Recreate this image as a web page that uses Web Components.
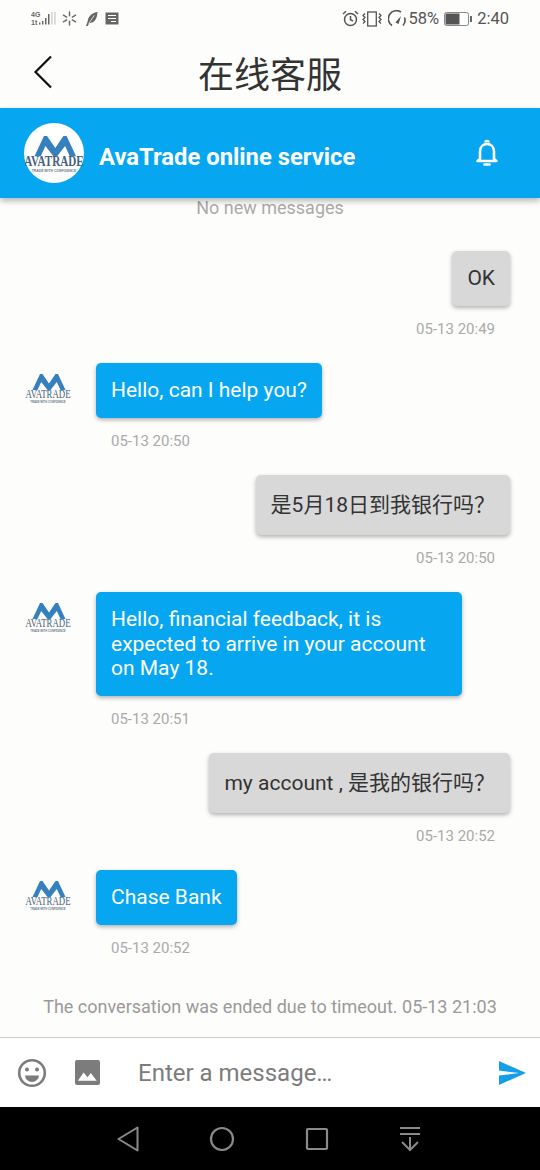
<!DOCTYPE html>
<html lang="zh"><head><meta charset="utf-8"><title>在线客服</title>
<style>
html,body{margin:0;padding:0;height:1170px;width:540px;overflow:hidden;background:#fdfdfb;font-family:Roboto,"Noto Sans CJK SC",sans-serif}
body{display:flex;flex-direction:column}
</style></head><body>
<status-bar></status-bar>
<title-bar>在线客服</title-bar>
<chat-header>AvaTrade online service</chat-header>
<chat-list>
  <chat-note slot="top">No new messages</chat-note>
  <chat-msg side="out" time="05-13 20:49" style="margin-top:33px">OK</chat-msg>
  <chat-msg side="in" time="05-13 20:50">Hello, can I help you?</chat-msg>
  <chat-msg side="out" tall time="05-13 20:50">是5月18日到我银行吗？</chat-msg>
  <chat-msg side="in" time="05-13 20:51">Hello, financial feedback, it is expected to arrive in your account on May 18.</chat-msg>
  <chat-msg side="out" tall time="05-13 20:52">my account , 是我的银行吗？</chat-msg>
  <chat-msg side="in" time="05-13 20:52">Chase Bank</chat-msg>
  <chat-note end>The conversation was ended due to timeout. 05-13 21:03</chat-note>
</chat-list>
<chat-composer placeholder="Enter a message…"></chat-composer>
<nav-bar></nav-bar>
<script>
function def(name, html){
  customElements.define(name, class extends HTMLElement{
    connectedCallback(){
      if(this.shadowRoot) return;
      const r=this.attachShadow({mode:'open'});
      r.innerHTML=typeof html==='function'?html(this):html;
    }
  });
}
function avaLogo(w){return `<svg width="${w}" viewBox="0 0 46 29" style="display:block" xmlns="http://www.w3.org/2000/svg">
<path d="M7.500 16L15 0H17.500L24 9.500 30.500 0H33L40.500 16H35.500L31.800 8 25.500 16H22.500L16.200 8 12.500 16z" fill="#3580bd"/>
<text transform="translate(23,24) scale(.767,1)" text-anchor="middle" font-family="Liberation Serif,serif" font-size="11.500" fill="#46617c">AVATRADE</text>
<text transform="translate(23,28.500) scale(.77,1)" text-anchor="middle" font-family="Liberation Sans,sans-serif" font-size="3.500" font-weight="700" fill="#6a7a8a">TRADE WITH CONFIDENCE</text>
</svg>`}

def('status-bar',`<style>
:host{display:flex;align-items:center;justify-content:space-between;height:40px;flex:none;padding:0 31px 3px 31px;box-sizing:border-box;color:#555;font:16.500px Roboto,sans-serif}
.g{display:flex;align-items:center}
svg{display:block}
</style>
<div class="g">
<svg width="25" height="15" viewBox="0 0 25 15" fill="#666"><text x="0" y="6" font-family="Liberation Sans,sans-serif" font-size="7" font-weight="700">4G</text><text x="0" y="13.500" font-family="Liberation Sans,sans-serif" font-size="7" font-weight="700">1t</text><rect x="8" y="11.500" width="1.500" height="2"/><rect x="11" y="10" width="1.500" height="3.500"/><rect x="14" y="7" width="1.500" height="6.500"/><rect x="17" y="3" width="1.500" height="10.500"/><rect x="20.500" y="1" width=".9" height="12.500" fill="#b5b5b5"/><rect x="23.500" y="1" width=".9" height="12.500" fill="#b5b5b5"/></svg>
<svg width="15" height="15" viewBox="0 0 16 16" stroke="#666" stroke-width="1.500" stroke-linecap="round" style="margin-left:6px"><path d="M8 1v4M8 11v4M1.500 4.500l3.500 2M11 9.500l3.500 2M1.500 11.500l3.500-2M11 6.500l3.500-2"/></svg>
<svg width="13" height="16" viewBox="0 0 14 16" style="margin-left:8px"><path d="M1 15.500C2 13 2.500 12 3 9.500 4 5 8 1 13.500.5 13 5 12.500 9 8.500 11.500L4.500 12.500 3 15.500z" fill="#666"/><path d="M4 13L10 4" stroke="#fff" stroke-width=".8"/></svg>
<svg width="14" height="13" viewBox="0 0 14 13" style="margin-left:7px"><path d="M.5.500h13v12H.5z" fill="#666"/><path d="M3 3.500h8M3 6.500h8M6 9.500h5" stroke="#fff" stroke-width="1.200"/></svg>
</div>
<div class="g">
<svg width="17" height="17" viewBox="0 0 17 17" fill="none" stroke="#555" stroke-width="1.500"><circle cx="8.500" cy="9.500" r="6"/><path d="M8.500 6v3.800l2.500 1.200M1 4l3-2.800M16 4l-3-2.800"/></svg>
<svg width="20" height="16" viewBox="0 0 20 16" fill="none" stroke="#555" stroke-width="1.300" style="margin-left:3px"><rect x="5.700" y="1" width="8.600" height="14"/><path d="M3 2.500l-2 2 2 2-2 2 2 2-2 2M17 2.500l2 2-2 2 2 2-2 2 2 2"/></svg>
<svg width="19" height="18" viewBox="0 0 19 18" fill="none" stroke="#555" stroke-width="1.600" style="margin-left:6px"><path d="M4 15.500A8 8 0 0 1 13 2"/><path d="M16.500 7.500a8 8 0 0 1-1.500 8"/><path d="M7.500 12.500L13 6l-2.500 8z" fill="#555" stroke="none"/></svg>
<span style="margin-left:2px">58%</span>
<svg width="28" height="14" viewBox="0 0 28 14" style="margin-left:5px"><rect x=".5" y=".5" width="24" height="13" rx="2" fill="#fff" stroke="#888"/><rect x="1.500" y="1.500" width="14" height="11" fill="#555"/><rect x="26" y="4" width="2" height="6" fill="#666"/></svg>
<span style="margin-left:5px">2:40</span>
</div>`);

def('title-bar',`<style>
:host{display:flex;align-items:center;justify-content:center;height:68px;flex:none;position:relative;color:#333;font:36px/1 "Noto Sans CJK SC",sans-serif;padding-bottom:4px;box-sizing:border-box}
.back{position:absolute;left:33px;top:15px;display:block}
</style>
<svg class="back" width="20" height="34" viewBox="0 0 20 34" fill="none" stroke="#111" stroke-width="2.200"><path d="M18 1.500L2.500 17 18 32.500"/></svg>
<slot></slot>`);

def('chat-header',()=>`<style>
:host{display:flex;align-items:center;height:90px;flex:none;background:#06a6f1;color:#fff;font:700 23.800px Roboto,sans-serif;padding:0 41px 0 24px;box-sizing:border-box;position:relative;z-index:2;box-shadow:0 3px 6px rgba(0,0,0,.28)}
.av{width:60px;height:60px;border-radius:50%;background:#fff;display:flex;align-items:center;justify-content:center;margin-right:15px;flex:none;padding-top:3px;box-sizing:border-box}
.t{flex:1;padding-top:8px}
svg.b{display:block}
</style>
<div class="av">${avaLogo(58)}</div><div class="t"><slot></slot></div>
<svg class="b" width="24" height="28" viewBox="0 0 24 28" fill="none" stroke="#fff" stroke-width="2.600" stroke-linejoin="round"><path d="M5 20V12.500C5 8 8 5 12 5s7 3 7 7.500V20l2.500 2h-19z"/><path d="M10.500 3.500a1.500 1.500 0 0 1 3 0"/><path d="M9.500 25.500h5" stroke-linecap="round"/></svg>`);

def('chat-list',`<style>
:host{display:flex;flex-direction:column;flex:1;min-height:0;overflow:hidden}
</style><slot name="top"></slot><slot></slot>`);

def('chat-note',`<style>
:host{display:block;text-align:center;color:#aaa;font:18px/20px Roboto,sans-serif}
:host([end]){color:#9a9a9a;margin-top:15px}
</style><slot></slot>`);

def('chat-msg',el=>{
 const out=el.getAttribute('side')==='out';
 const t=el.getAttribute('time');
 return `<style>
:host{display:flex;flex:none;padding:0 30px 25.500px 25px;align-items:flex-start;${out?'justify-content:flex-end;':''}}
:host([tall]){padding-bottom:25px}
.av{width:46px;flex:none;margin:11px 25px 0 0}
.c{display:flex;flex-direction:column;${out?'align-items:flex-end;':'align-items:flex-start;'}max-width:366px}
.b{padding:15px;box-sizing:border-box;border-radius:5px;font:21px/24.500px Roboto,"Noto Sans CJK SC",sans-serif;${out?'background:#d8d8d8;color:#333;':'background:#06a6f1;color:#fff;'}box-shadow:0 2px 4px rgba(0,0,0,.3)}
:host([tall]) .b{line-height:30px}
.t{margin:14px ${out?'15px':'0'} 0 ${out?'0':'15px'};font:15px/18px Roboto,sans-serif;color:#aaa}
</style>
${out?'':`<div class="av">${avaLogo(46)}</div>`}
<div class="c"><div class="b"><slot></slot></div><div class="t">${t}</div></div>`});

def('chat-composer',el=>`<style>
:host{display:flex;align-items:center;height:70px;flex:none;background:#fff;border-top:1px solid #ccc;box-sizing:border-box;padding:0 14px 0 17px;color:#7c7c7c;font:24px Roboto,sans-serif}
svg{display:block;flex:none}
.p{flex:1;margin-left:38px}
</style>
<svg width="30" height="30" viewBox="0 0 30 30"><circle cx="15" cy="15" r="12.800" fill="none" stroke="#7c7c7c" stroke-width="2.600"/><circle cx="10" cy="11.500" r="2" fill="#7c7c7c"/><circle cx="20" cy="11.500" r="2" fill="#7c7c7c"/><path d="M8 17.500h14a7 6.500 0 0 1-14 0z" fill="#7c7c7c"/></svg>
<svg width="25" height="25" viewBox="0 0 26 26" style="margin-left:28px"><path d="M2 0h22a2 2 0 0 1 2 2v22a2 2 0 0 1-2 2H2a2 2 0 0 1-2-2V2a2 2 0 0 1 2-2z" fill="#7c7c7c"/><path d="M3 21.500L9 13l4 5 3.500-4.500 6 8z" fill="#fff"/></svg>
<div class="p">${el.getAttribute('placeholder')}</div>
<svg width="27" height="24" viewBox="0 0 27 24"><path d="M0 0L27 12 0 24V14.500L20 12 0 9.500z" fill="#159fe8"/></svg>`);

def('nav-bar',`<style>
:host{display:flex;align-items:center;height:63px;flex:none;background:#000;padding:0 119px 0 117px;box-sizing:border-box;justify-content:space-between}
svg{display:block}
</style>
<svg width="22" height="26" viewBox="0 0 22 26" fill="none" stroke="#8a8a8a" stroke-width="2" stroke-linejoin="round"><path d="M20.500 1.500v23L1.500 13z"/></svg>
<svg width="26" height="26" viewBox="0 0 26 26" fill="none" stroke="#8a8a8a" stroke-width="2.200"><circle cx="13" cy="13" r="11"/></svg>
<svg width="24" height="24" viewBox="0 0 24 24" fill="none" stroke="#8a8a8a" stroke-width="2.200" stroke-linejoin="round"><rect x="2" y="2" width="20" height="20" rx="1"/></svg>
<svg width="22" height="26" viewBox="0 0 22 26" fill="none" stroke="#8a8a8a" stroke-width="2"><path d="M1 2h20M1 8h20M11 11v13M3 16l8 8 8-8"/></svg>`);
</script>
</body></html>
